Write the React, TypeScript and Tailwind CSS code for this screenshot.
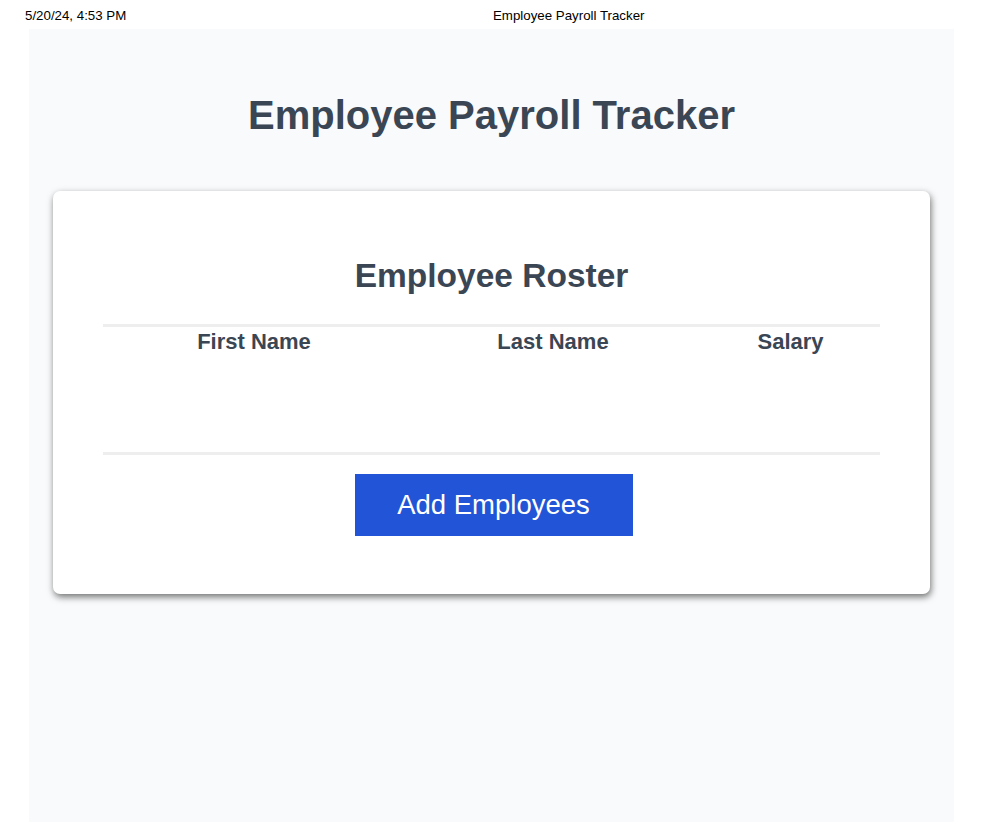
export default function App() {
  return (
    <div className="min-h-[822px] bg-white font-['Liberation_Sans',Arial,sans-serif] text-[#3b4654]">
      <div className="relative h-[29px] text-[13.3px] text-black">
        <span className="absolute left-[25px] top-[6px]">5/20/24, 4:53 PM</span>
        <span className="absolute left-[493px] top-[6px]">Employee Payroll Tracker</span>
      </div>
      <main className="ml-[29px] mr-[35px] min-h-[793px] bg-[#f9fafb] pt-[63px]">
        <h1 className="text-center text-[40px] font-bold leading-[46px]">Employee Payroll Tracker</h1>
        <section className="mx-[24px] mt-[53px] rounded-[7px] bg-white px-[50px] pb-[58px] pt-[65px] shadow-[1px_3px_7px_rgba(0,0,0,0.55)]">
          <h2 className="text-center text-[33.5px] font-bold leading-[39px]">Employee Roster</h2>
          <div className="mt-[29px] border-y-[3px] border-[#eeeeee]">
            <div className="grid h-[125px] grid-cols-[302px_296px_1fr] content-start text-[22px] font-bold leading-[26px]">
              <div className="pt-[2px] text-center">First Name</div>
              <div className="pt-[2px] text-center">Last Name</div>
              <div className="pt-[2px] text-center">Salary</div>
            </div>
          </div>
          <div className="mt-[19px] flex justify-center">
            <button className="ml-[4px] h-[62px] w-[278px] bg-[#2154d6] text-[27.5px] text-white">Add Employees</button>
          </div>
        </section>
      </main>
    </div>
  );
}
